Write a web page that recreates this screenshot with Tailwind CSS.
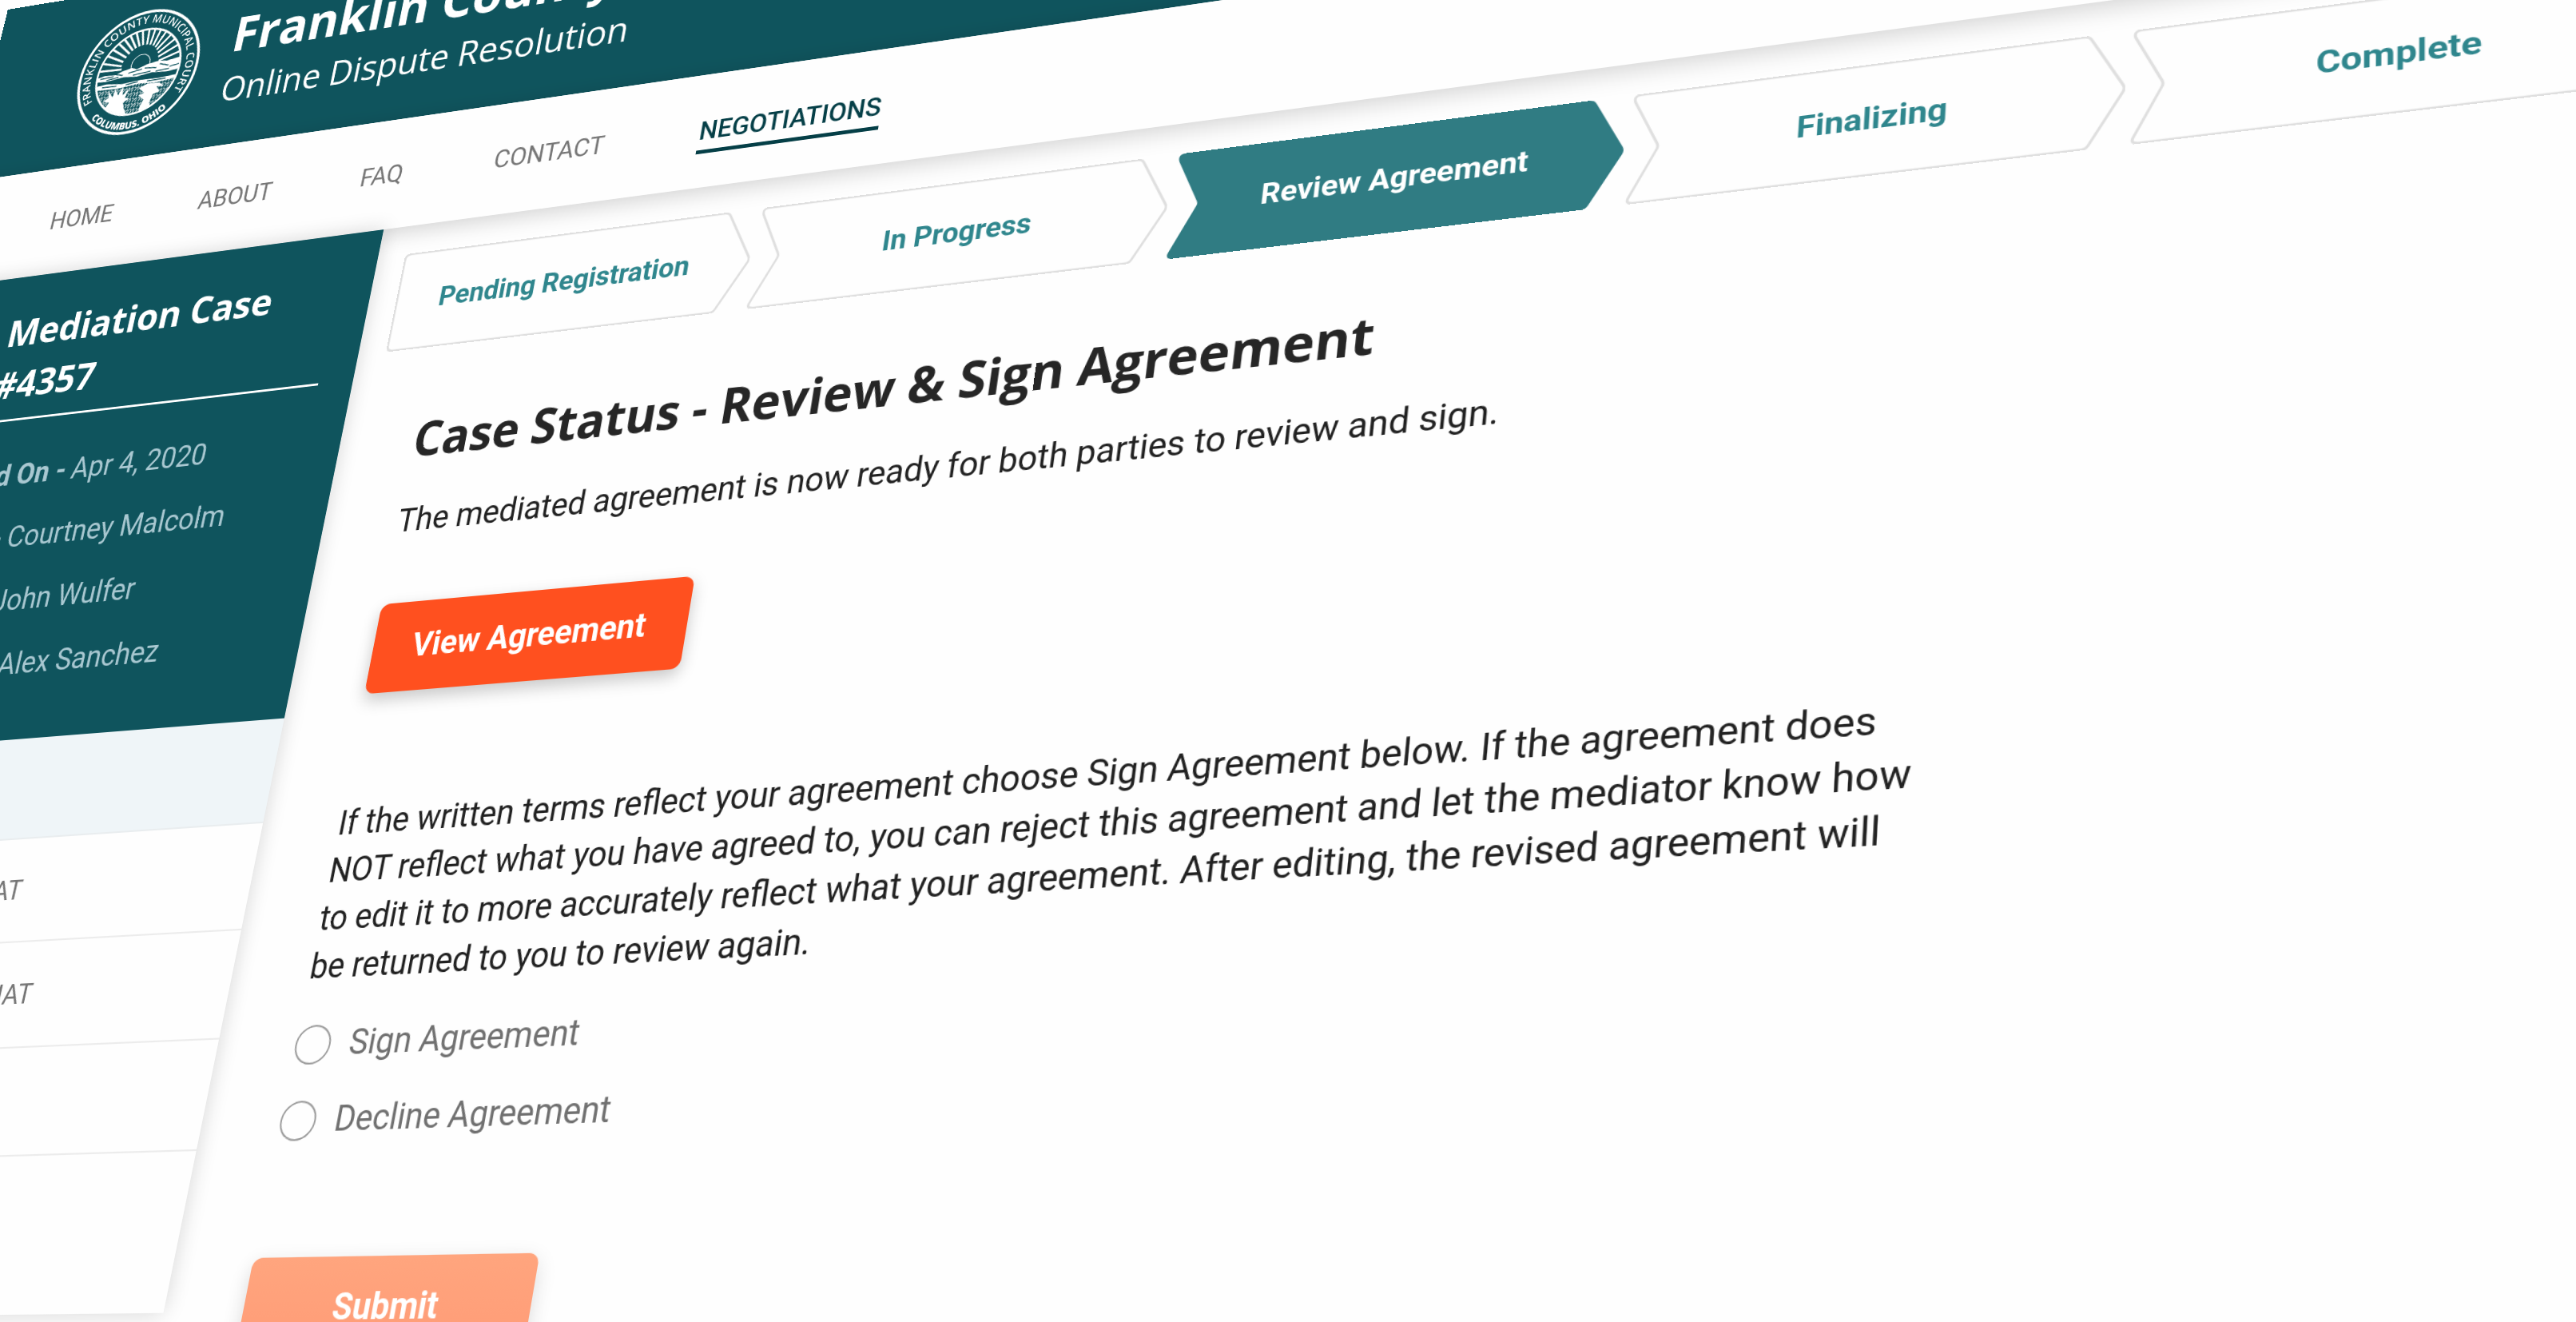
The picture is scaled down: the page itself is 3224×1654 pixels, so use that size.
<!DOCTYPE html>
<html lang="en">
<head>
<meta charset="utf-8">
<title>Franklin County Municipal Court - Online Dispute Resolution</title>
<script src="https://cdn.jsdelivr.net/npm/@tailwindcss/browser@4"></script>
</head>
<body class="bg-[#fefefe]">
<div class="h-screen w-full overflow-hidden">
  <!-- The whole page is shown tilted in perspective -->
  <div class="w-full origin-top-left bg-[#fefefe] font-[Roboto,sans-serif] text-[#212121] [transform:matrix3d(0.8001001,-0.1324035,0,-0.00007492223,-0.2078953,0.8412560,0,-0.00006820004,0,0,1,0,9.8842,11.96927,0,1)]">

    <header class="flex h-[252px] items-center gap-11 bg-[#0f545d] pl-[141px] text-white">
      <svg class="size-[180px] shrink-0" viewBox="0 0 182 182" role="img" aria-label="Franklin County Municipal Court seal">
        <defs>
          <path id="arcTop" d="M44 144A71 71 0 1 1 138 144"/>
          <path id="arcBottom" d="M10 105A82 82 0 0 0 172 105"/>
          <clipPath id="inner"><circle cx="91" cy="91" r="61"/></clipPath>
          <pattern id="field" width="9" height="8" patternUnits="userSpaceOnUse">
            <path d="M1 1l3 2M5 4l3-3M2 7l2-3M6 7l2-2M8 3l1 1" stroke="#fff" stroke-width="1.300"/>
          </pattern>
        </defs>
        <circle cx="91" cy="91" r="88.500" fill="none" stroke="#fff" stroke-width="4"/>
        <circle cx="91" cy="91" r="62" fill="none" stroke="#fff" stroke-width="3"/>
        <g fill="#fff" font-family="Open Sans, sans-serif" font-weight="600">
          <text font-size="16" text-anchor="middle"><textPath href="#arcTop" startOffset="50%">FRANKLIN COUNTY MUNICIPAL COURT</textPath></text>
          <text font-size="14" font-weight="800" text-anchor="middle"><textPath href="#arcBottom" startOffset="50%">COLUMBUS. OHIO</textPath></text>
        </g>
        <g clip-path="url(#inner)">
          <path stroke="#fff" stroke-width="3" d="M64 84L28 82M63 79L28 70M64 73L30 57M67 67L34 46M71 62L41 36M75 58L49 29M79 55L59 24M84 53L70 22M89 52L81 20M95 52L93 20M100 53L104 20M105 55L115 22M109 58L126 27M112 62L137 34M115 67L146 43M117 73L153 55M119 79L157 67M119 84L159 80"/>
          <circle cx="92" cy="80" r="14" fill="none" stroke="#fff" stroke-width="1.200"/>
          <path d="M26 93l14-3 16 1 10-4 14-3 8 3 14-5 18-3 12 2 24-4v18l-20 2-24-2-22 3-20-2-26 3-18-1z" fill="#fff"/>
          <path d="M34 94l20-1M56 90l12 3M76 91l20-3M100 87l18 2M122 84l14 4M44 97l18-2M84 95l26-2M118 94l20-1M138 90l14-2" stroke="#0f545d" stroke-width="1.500"/>
          <path d="M26 105l20-2 24 3 28-2 28 1 30-2v5l-36 3-24-2-32 3-38-2z" fill="#fff"/>
          <path d="M40 107l22 1M76 108l18-2M108 107l28 0" stroke="#0f545d" stroke-width="1.500"/>
          <rect x="26" y="109" width="130" height="50" fill="url(#field)"/>
          <path d="M52 114l8 10 2-12 6 10 5-12 2 13 9-10-5 14 8 2-9 5 4 10 8 13-10 6-22-2-12-10 6-12 4-8-10-3 8-4z" fill="#fff"/>
          <path d="M98 116l12-5 18 1 8 6-11-1 6 8-9 3-3 12 7 12-16 5-5-10 4-13-9-7 8-3z" fill="#fff"/>
        </g>
      </svg>
      <div class="pt-[14px] font-['Open_Sans',sans-serif] whitespace-nowrap">
        <p class="text-[68px] leading-[76px] font-bold">Franklin County Municipal Court</p>
        <p class="text-[47px] leading-[82px]">Online Dispute Resolution</p>
      </div>
    </header>

    <nav class="relative flex h-[151px] items-center gap-[125px] bg-[#fefefe] pl-[149px] text-[33px] leading-10 text-[#757575] shadow-[0_6px_28px_rgba(0,0,0,0.18)]">
      <a href="#home">HOME</a>
      <a href="#about">ABOUT</a>
      <a href="#faq">FAQ</a>
      <a href="#contact">CONTACT</a>
      <a href="#negotiations" class="relative font-medium text-[#053f47] after:absolute after:inset-x-0 after:-bottom-[10px] after:h-[5px] after:bg-[#053f47]">NEGOTIATIONS</a>
    </nav>

    <div class="flex items-start">
      <aside class="relative w-[647px] shrink-0 bg-[#fefefe] shadow-[0_0_26px_rgba(0,0,0,0.16)]">
        <section class="bg-[#0f545d] pt-[42px] pr-12 pb-14 pl-[125px]">
          <h2 class="border-b-3 border-white pb-3 font-['Open_Sans',sans-serif] text-[50px] leading-[72px] font-bold text-white">Mediation Case #4357</h2>
          <dl class="mt-[33px] text-[38px] leading-[84px] whitespace-nowrap text-[#a9c8d1]">
            <div class="flex gap-2"><dt class="flex w-[136px] justify-end font-bold">Filed On&nbsp;-</dt><dd>Apr 4, 2020</dd></div>
            <div class="flex gap-2"><dt class="flex w-[64px] justify-end font-bold">Mediator&nbsp;-</dt><dd>Courtney Malcolm</dd></div>
            <div class="flex gap-2"><dt class="flex w-[64px] justify-end font-bold">Plaintiff&nbsp;-</dt><dd>John Wulfer</dd></div>
            <div class="flex gap-2"><dt class="flex w-[94px] justify-end font-bold">Defendant&nbsp;-</dt><dd>Alex Sanchez</dd></div>
          </dl>
        </section>
        <ul class="pb-[180px] text-[34px] text-[#757575]">
          <li><a href="#status" class="flex h-[127px] items-center border-b-2 border-[#e9edef] bg-[#eff5f8] pl-[108px]">STATUS</a></li>
          <li><a href="#private-chat" class="flex h-[127px] items-center border-b-2 border-[#ececec] pl-[108px]">PRIVATE CHAT</a></li>
          <li><a href="#mediation-chat" class="flex h-[127px] items-center border-b-2 border-[#ececec] pl-[108px]">MEDIATION CHAT</a></li>
          <li><a href="#files" class="flex h-[127px] items-center border-b-2 border-[#ececec] pl-[108px]">FILES</a></li>
        </ul>
      </aside>

      <main class="min-w-0 flex-1 pt-[38px] pb-[300px]">
        <ol class="flex gap-[6px] pr-[54px] pl-[38px] text-[35px] font-bold text-[#2f868d]">
          <li class="relative flex h-[129px] grow-[465] basis-0 items-center justify-center">
            <svg class="absolute inset-0 size-full" viewBox="0 0 465 138" preserveAspectRatio="none"><path d="M9 1H424Q429 1 431 5L463 65Q465 69 463 73L431 133Q429 137 424 137H8Q1 137 1 130V9Q1 1 9 1Z" fill="#fefefe" stroke="#dfdfdf" stroke-width="3"/></svg>
            <span class="relative mr-[18px]">Pending Registration</span>
          </li>
          <li class="relative flex h-[129px] grow-[499] basis-0 items-center justify-center">
            <svg class="absolute inset-0 size-full" viewBox="0 0 499 138" preserveAspectRatio="none"><path d="M9 1H458Q463 1 465 5L497 65Q499 69 497 73L465 133Q463 137 458 137H8Q0 137 3 130L29 73Q31 69 29 65L3 10Q0 1 9 1Z" fill="#fefefe" stroke="#dfdfdf" stroke-width="3"/></svg>
            <span class="relative">In Progress</span>
          </li>
          <li class="relative flex h-[129px] grow-[499] basis-0 items-center justify-center text-white" aria-current="step">
            <svg class="absolute inset-0 size-full" viewBox="0 0 499 138" preserveAspectRatio="none"><path d="M9 1H458Q463 1 465 5L497 65Q499 69 497 73L465 133Q463 137 458 137H8Q0 137 3 130L29 73Q31 69 29 65L3 10Q0 1 9 1Z" fill="#307c83" stroke="#307c83" stroke-width="2"/></svg>
            <span class="relative">Review Agreement</span>
          </li>
          <li class="relative flex h-[129px] grow-[499] basis-0 items-center justify-center">
            <svg class="absolute inset-0 size-full" viewBox="0 0 499 138" preserveAspectRatio="none"><path d="M9 1H458Q463 1 465 5L497 65Q499 69 497 73L465 133Q463 137 458 137H8Q0 137 3 130L29 73Q31 69 29 65L3 10Q0 1 9 1Z" fill="#fefefe" stroke="#dfdfdf" stroke-width="3"/></svg>
            <span class="relative">Finalizing</span>
          </li>
          <li class="relative flex h-[129px] grow-[499] basis-0 items-center justify-center">
            <svg class="absolute inset-0 size-full" viewBox="0 0 499 138" preserveAspectRatio="none"><path d="M9 1H458Q463 1 465 5L497 65Q499 69 497 73L465 133Q463 137 458 137H8Q0 137 3 130L29 73Q31 69 29 65L3 10Q0 1 9 1Z" fill="#fefefe" stroke="#dfdfdf" stroke-width="3"/></svg>
            <span class="relative">Complete</span>
          </li>
        </ol>

        <div class="pl-[101px] text-[40px] leading-14">
          <h1 class="mt-[79px] font-['Open_Sans',sans-serif] text-[60px] leading-20 font-bold text-[#262626]">Case Status - Review &amp; Sign Agreement</h1>
          <p class="mt-[37px]">The mediated agreement is now ready for both parties to review and sign.</p>
          <button type="button" class="mt-[75px] block h-[110px] w-[400px] rounded-xl bg-[#ff501f] font-bold text-white shadow-[0_8px_20px_rgba(0,0,0,0.22)]">View Agreement</button>
          <p class="mt-32 max-w-[1760px]">If the written terms reflect your agreement choose Sign Agreement below. If the agreement does NOT reflect what you have agreed to, you can reject this agreement and let the mediator know how to edit it to more accurately reflect what your agreement. After editing, the revised agreement will be returned to you to review again.</p>
          <form>
            <fieldset class="mt-[33px] flex flex-col gap-[30px] text-[#707070]">
              <label class="flex items-center gap-[24px]"><input type="radio" name="decision" class="size-[45px] appearance-none rounded-full border-2 border-[#9a9a9a] bg-[#fefefe]">Sign Agreement</label>
              <label class="flex items-center gap-[24px]"><input type="radio" name="decision" class="size-[45px] appearance-none rounded-full border-2 border-[#9a9a9a] bg-[#fefefe]">Decline Agreement</label>
            </fieldset>
            <button type="submit" class="mt-[124px] block h-[110px] w-[350px] rounded-xl bg-linear-to-b from-[#ffa57e] to-[#ff9b76] font-bold text-white shadow-[0_8px_24px_rgba(0,0,0,0.14)]">Submit</button>
          </form>
        </div>
      </main>
    </div>
  </div>
</div>
</body>
</html>
